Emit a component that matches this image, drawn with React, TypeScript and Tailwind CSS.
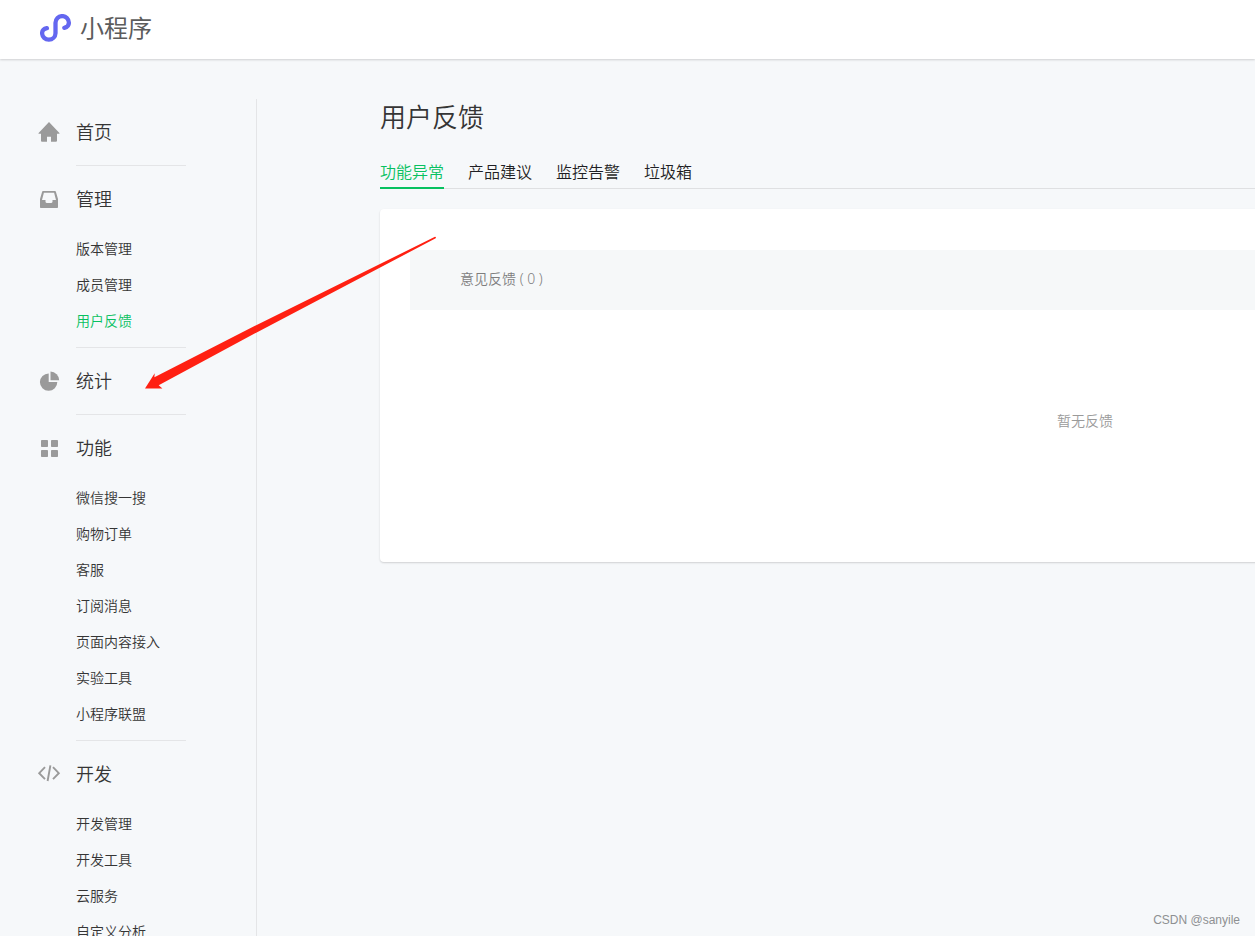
import React from "react";

type Section = {
  title: string;
  icon: React.ReactNode;
  items: string[];
};

const HomeIcon = () => (
  <svg viewBox="0 0 24 24" className="size-6" fill="currentColor" aria-hidden="true">
    <path d="M12 2.1 1.6 12.9c-.3.4-.1.8.4.8h2v7.100c0 .5.4.900.900.900H10v-5h4v5h5.100c.5 0 .9-.4.900-.900v-7.100h2c.5 0 .7-.4.4-.8z" />
  </svg>
);

const InboxIcon = () => (
  <svg viewBox="0 0 24 24" className="size-6" fill="currentColor" aria-hidden="true">
    <path
      fillRule="evenodd"
      d="M6 4h12c.4 0 .7.2.8.6L21 11.900V20c0 .6-.4 1-1 1H4c-.6 0-1-.4-1-1v-8.100L5.200 4.600c.1-.4.400-.6.8-.6zM6.900 5.700 5 13h3.500v1.600c0 .800.400 1.300 1.200 1.300h4.600c.800 0 1.200-.500 1.200-1.300V13H19l-1.900-7.300z"
    />
  </svg>
);

const PieIcon = () => (
  <svg viewBox="0 0 24 24" className="size-6" fill="currentColor" aria-hidden="true">
    <path d="M11.700 4.400v8.600h8.600A8.700 8.700 0 1 1 11.700 4.400z" />
    <path d="M13.500 2.600a8.700 8.700 0 0 1 8.700 8.700h-8.700z" />
  </svg>
);

const GridIcon = () => (
  <svg viewBox="0 0 24 24" className="size-6" fill="currentColor" aria-hidden="true">
    <rect x="4" y="4" width="7" height="7" rx="0.8" />
    <rect x="14" y="4" width="7" height="7" rx="0.8" />
    <rect x="4" y="14" width="7" height="7" rx="0.8" />
    <rect x="14" y="14" width="7" height="7" rx="0.8" />
  </svg>
);

const CodeIcon = () => (
  <svg
    viewBox="0 0 24 24"
    className="size-6"
    fill="none"
    stroke="currentColor"
    strokeWidth="1.900"
    aria-hidden="true"
  >
    <path d="M8 5.200 2.200 11.200l5.800 6M16 5.200l5.800 6-5.800 6M13.400 3.400 10.600 19" />
  </svg>
);

const sections: Section[] = [
  { title: "首页", icon: <HomeIcon />, items: [] },
  { title: "管理", icon: <InboxIcon />, items: ["版本管理", "成员管理", "用户反馈"] },
  { title: "统计", icon: <PieIcon />, items: [] },
  {
    title: "功能",
    icon: <GridIcon />,
    items: ["微信搜一搜", "购物订单", "客服", "订阅消息", "页面内容接入", "实验工具", "小程序联盟"],
  },
  { title: "开发", icon: <CodeIcon />, items: ["开发管理", "开发工具", "云服务", "自定义分析"] },
];

const tabs = ["功能异常", "产品建议", "监控告警", "垃圾箱"];

function Header() {
  return (
    <header className="z-10 flex h-[59px] shrink-0 items-center bg-white px-10 pb-1 shadow-[0_1px_2px_rgba(0,0,0,0.16)]">
      <a href="#" className="flex items-center gap-2">
        <svg viewBox="40 14 32 28" className="h-7 w-8" fill="none" aria-hidden="true">
          <path
            d="M46.900 28.200C44 28.800 42.100 30.500 42.100 33.200A6.700 6.700 0 0 0 48.900 39.700A6.700 6.700 0 0 0 55.500 33.200V22.700A6.700 6.700 0 0 1 62.200 16.100A6.700 6.700 0 0 1 68.900 22.700C68.900 25.400 67 27.200 64.300 27.800"
            stroke="#6467f0"
            strokeWidth="4.300"
            strokeLinecap="round"
          />
        </svg>
        <span className="pb-0.5 text-2xl font-normal text-[#5c5c5c]">小程序</span>
      </a>
    </header>
  );
}

function Sidebar() {
  return (
    <nav className="w-[257px] shrink-0 border-r border-[#e4e5e7] pl-[37px]">
      {sections.map((section, index) => (
        <section key={section.title}>
          {index > 0 && <div className="ml-[39px] h-px w-[110px] bg-[#e4e5e7]" />}
          <a href="#" className="flex h-[66px] items-center gap-[15px] text-lg text-[#353535]">
            <span className="text-[#9a9a9a]">{section.icon}</span>
            <span className="pb-0.5">{section.title}</span>
          </a>
          {section.items.length > 0 && (
            <ul className="-mt-0.5 pb-[9px] pl-[39px]">
              {section.items.map((item) => (
                <li key={item}>
                  <a
                    href="#"
                    className={
                      item === "用户反馈"
                        ? "block text-sm leading-9 text-[#07c160]"
                        : "block text-sm leading-9 text-[#353535]"
                    }
                  >
                    {item}
                  </a>
                </li>
              ))}
            </ul>
          )}
        </section>
      ))}
    </nav>
  );
}

function Feedback() {
  return (
    <main className="ml-[123px] min-w-[1410px] flex-1">
      <h1 className="text-[26px] leading-[34px] text-[#353535]">用户反馈</h1>
      <div role="tablist" className="mt-6 flex gap-6 border-b border-[#dfe0e2]">
        {tabs.map((tab, index) => (
          <button
            key={tab}
            type="button"
            role="tab"
            aria-selected={index === 0}
            className={
              index === 0
                ? "-mb-px border-b-2 border-[#07c160] pb-0.5 text-base leading-7 text-[#07c160]"
                : "-mb-px border-b-2 border-transparent pb-0.5 text-base leading-7 text-[#1f1f24]"
            }
          >
            {tab}
          </button>
        ))}
      </div>
      <div className="mt-5 rounded bg-white px-[30px] pt-[41px] pb-[132px] shadow-[0_1px_2px_rgba(0,0,0,0.16)]">
        <h2 className="bg-[#f6f8f9] px-[50px] pb-0.5 font-['Noto_Sans','Noto_Sans_CJK_SC',sans-serif] text-sm leading-[58px] text-[#7e7e7e]">
          意见反馈 ( 0 )
        </h2>
        <p className="pt-[100px] text-center text-sm text-[#9a9a9a]">暂无反馈</p>
      </div>
    </main>
  );
}

export default function App() {
  return (
    <div className="relative flex h-screen flex-col overflow-hidden bg-[#f6f8fa] font-['Noto_Sans_CJK_SC',sans-serif] font-[350]">
      <Header />
      <div className="flex min-h-0 flex-1 overflow-hidden pt-10">
        <Sidebar />
        <Feedback />
      </div>
      <svg
        viewBox="0 0 292 153"
        className="pointer-events-none absolute top-[236px] left-[145px] z-20 h-[153px] w-[292px]"
        aria-hidden="true"
      >
        <path
          d="M0 152.500 9.700 137.300 9.400 141.300 111.700 88.900 290 .8Q291.400 1 290.700 2.300L111.700 96.400 13.700 149.300 17.400 152.500Z"
          fill="#ff2012"
        />
      </svg>
      <span className="absolute right-[15px] bottom-2 font-['Liberation_Sans',sans-serif] text-xs font-normal text-[#8e9092]">
        CSDN @sanyile
      </span>
    </div>
  );
}
